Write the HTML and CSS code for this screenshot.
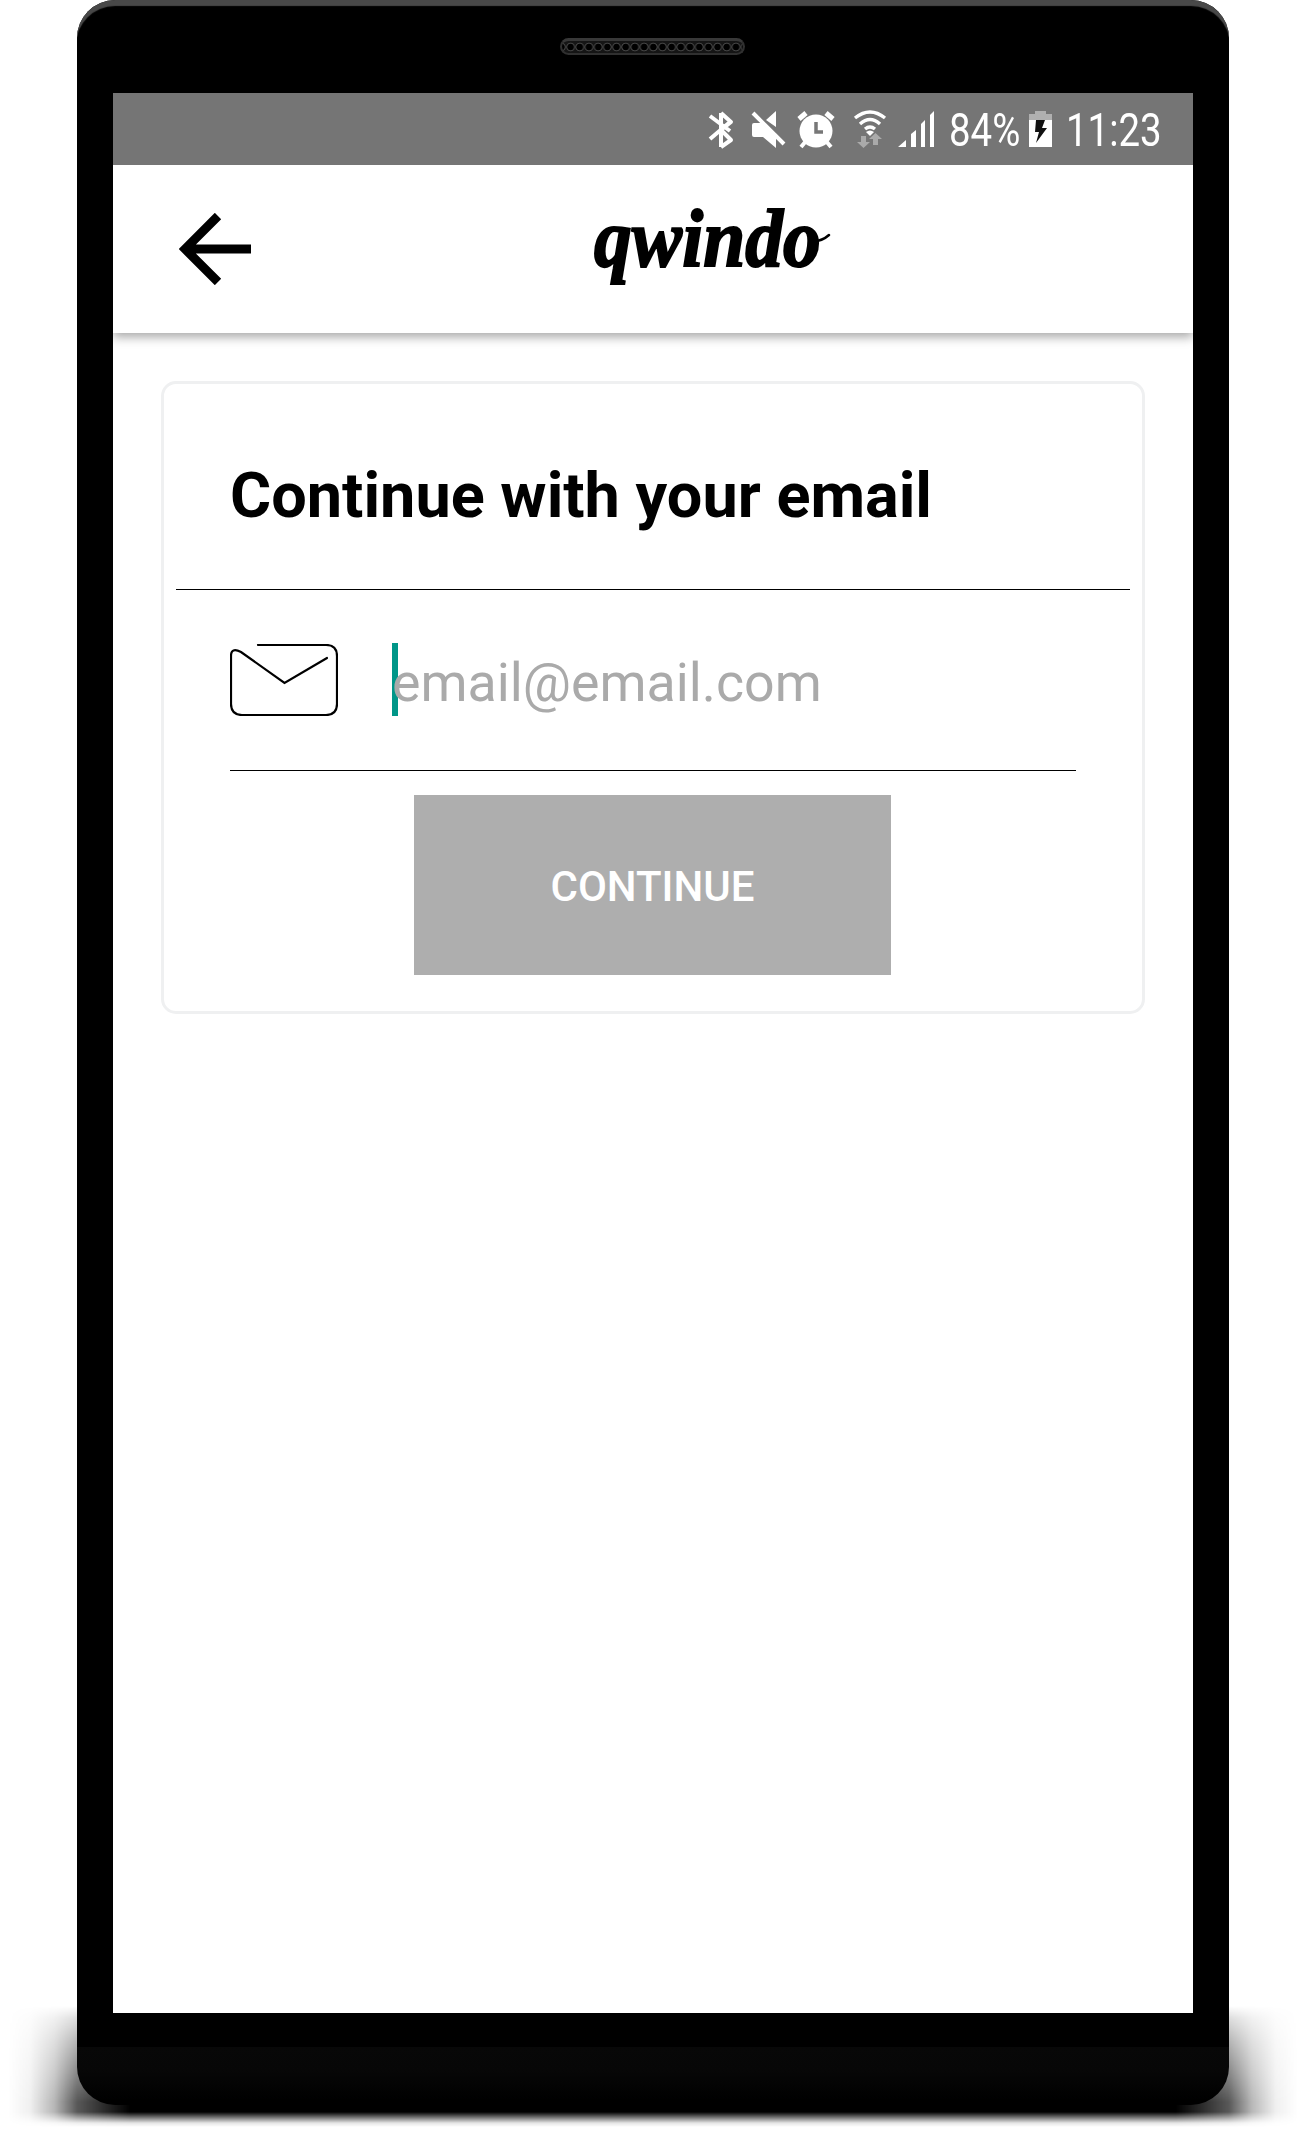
FILE: index.html
```html
<!DOCTYPE html>
<html lang="en">
<head>
<meta charset="utf-8">
<title>qwindo</title>
<link rel="stylesheet" href="styles.css">
</head>
<body>
<div class="stage">
<div class="ground-shadow"></div>
<div class="phone">
  <div class="speaker"></div>
  <main class="screen">
    <div class="status">
      <svg class="status-icons" width="236" height="72" viewBox="0 0 236 72" fill="#fff">
        <path d="M11 23l20 15M11 46l20-17M22 20v34M22 20l10 9-10 8M22 37l10 10-10 7" fill="none" stroke="#fff" stroke-width="4" stroke-linejoin="round" transform="translate(-1)"/>
        <path d="M52 32Q52 30 54 30H61L76 45V55L63 44H54Q52 44 52 42ZM66 27L76 18V34Z"/>
        <path d="M53 20L84 51" stroke="#fff" stroke-width="4"/>
        <circle cx="116" cy="38" r="16.500"/>
        <path d="M99 26l7-6M133 26l-7-6" stroke="#fff" stroke-width="5"/><path d="M106 48l-5 6M126 48l5 6" stroke="#fff" stroke-width="4"/>
        <path d="M116 29v10h7" fill="none" stroke="#777" stroke-width="3.500"/>
        <path d="M155 25Q170 13 185 25M160 31Q170 22 180 31M165 36Q170 32 175 36" fill="none" stroke="#fff" stroke-width="3.400"/>
        <path d="M166 39Q170 36 174 39L170 43Z"/>
        <path d="M161 43h5v6h4l-6.500 6-6.500-6h4zM173 52h5v-6h4l-6.500-6-6.500 6h4z" fill="#aaa"/>
        <path d="M198 54l8-7v7zM211 41l5-4v17h-5zM221 31l4-4v27h-4zM230 22l4-4v36h-4z"/>
      </svg>
      <span class="percent">84%</span>
      <svg class="battery" width="23" height="36" viewBox="0 0 23 36"><path d="M6 0h11v3h6v6H0V3h6z" fill="#b0b0b0"/><path d="M0 9h23v27H0z" fill="#fff"/><path d="M7 9h9l-3 8h5L7 32l3-11H6z" fill="#111"/></svg>
      <span class="clock">11:23</span>
    </div>
    <header class="bar">
      <svg width="72" height="72" viewBox="0 0 72 72" fill="none" stroke="#000" stroke-width="9"><path d="M39 3L6 36l33 33M8 36h64"/></svg>
      <div class="logo"><span>qwindo</span>
        <svg class="tail" width="20" height="12" viewBox="0 0 20 12" fill="none" stroke="#000" stroke-width="2.500" stroke-linecap="round"><path d="M1 9Q10 10 18 3"/></svg>
      </div>
    </header>
    <section class="card">
      <h1><span>Continue with your email</span></h1>
      <div class="field">
        <svg width="108" height="72" viewBox="0 0 108 72" fill="none" stroke="#000" stroke-width="2.200" stroke-linecap="round"><path d="M28 1H96Q107 1 107 12V60Q107 71 96 71H12Q1 71 1 60V12Q1 3 11 8L54.500 39 97 14"/></svg>
        <div class="entry"><i class="caret"></i><span>email@email.com</span></div>
      </div>
      <button type="button"><span>CONTINUE</span></button>
    </section>
  </main>
</div>
</div>
</body>
</html>
```
FILE: styles.css
```css
* { box-sizing: border-box; }
body { margin: 0; background: #fff; font-family: Roboto, sans-serif; color: #000; }
.stage { position: relative; height: 2130px; overflow: hidden; padding-left: 77px; }
.ground-shadow {
  position: absolute; left: 0; top: 2006px; width: 1305px; height: 124px;
  background: linear-gradient(90deg, transparent 8px, rgba(0,0,0,.06) 30px, rgba(0,0,0,.28) 54px, rgba(0,0,0,.65) 77px, #000 130px, #000 1176px, rgba(0,0,0,.65) 1229px, rgba(0,0,0,.28) 1252px, rgba(0,0,0,.06) 1276px, transparent 1298px);
  -webkit-mask-image: linear-gradient(transparent, rgba(0,0,0,.2) 12px, rgba(0,0,0,.45) 36px, rgba(0,0,0,.75) 70px, #000 96px, #000 106px, rgba(0,0,0,.5) 112px, rgba(0,0,0,.1) 117px, transparent 121px);
  mask-image: linear-gradient(transparent, rgba(0,0,0,.2) 12px, rgba(0,0,0,.45) 36px, rgba(0,0,0,.75) 70px, #000 96px, #000 106px, rgba(0,0,0,.5) 112px, rgba(0,0,0,.1) 117px, transparent 121px);
}
.phone {
  position: relative; width: 1152px; height: 2105px; padding: 18px 36px 0;
  border-radius: 38px;
  background: linear-gradient(#000 2047px, #080808 2047px, #070707 2070px, #000 2100px);
  box-shadow: inset 0 7px 1px -1px #484848;
}
.speaker {
  width: 185px; height: 17px; margin: 20px auto 38px; position: relative; left: -1px;
  border: 2px solid #303030; border-top: 3px solid #383838; border-radius: 9px;
  background: radial-gradient(circle, #000 0 3px, #454545 3.700px 4px, #151515 4.700px) 4px 1px / 9.200px 10px repeat-x #151515;
}
.screen { width: 1080px; height: 1920px; background: #fff; }
.status { height: 72px; display: flex; background: #757575; color: #fff; font-size: 46px; line-height: 74px; padding-left: 587px; white-space: nowrap; }
.status-icons { flex: none; width: 236px; height: 72px; margin-right: 13px; }
.status span { transform-origin: 0 50%; transform: scaleX(.835); }
.percent { width: 81px; }
.battery { flex: none; margin: 18px 14px 0 -1px; }
.clock { width: 110px; }
.bar { height: 168px; display: flex; align-items: center; padding: 0 66px; box-shadow: 0 4px 10px rgba(0,0,0,.35); clip-path: inset(0 0 -20px 0); }
.bar svg { flex: none; }
.logo { position: relative; width: 250px; margin-left: 343px; font: italic bold 83px/88px "Liberation Serif", serif; }
.logo span { display: inline-block; transform-origin: 0 50%; transform: translateY(-11px) scaleX(.91); -webkit-text-stroke: 2px #000; }
.tail { position: absolute; left: 217px; top: 27px; }
.card { width: 984px; height: 633px; margin: 48px; border: 3px solid #eff0f1; border-radius: 15px; padding: 0 12px; }
h1 { height: 206px; margin: 0; padding: 74px 0 0 54px; font-size: 63px; line-height: 76px; font-weight: 700; border-bottom: 1px solid #000; white-space: nowrap; }
h1 span, .entry span, button span { display: inline-block; transform-origin: 0 50%; }
.field { margin: 0 54px; height: 181px; border-bottom: 1px solid #000; display: flex; padding-top: 54px; }
.entry { position: relative; height: 73px; margin-left: 54px; font-size: 54px; line-height: 77px; color: #aaa; }
.entry span { position: relative; transform: scaleX(.994); }
.caret { position: absolute; left: 0; top: -1px; width: 6px; height: 73px; background: #009688; }
button { display: block; width: 477px; height: 180px; margin: 24px 0 0 238px; padding: 3px 0 0; border: 0; background: #aeaeae; color: #fff; font: 500 42px/177px Roboto, sans-serif; }
```
